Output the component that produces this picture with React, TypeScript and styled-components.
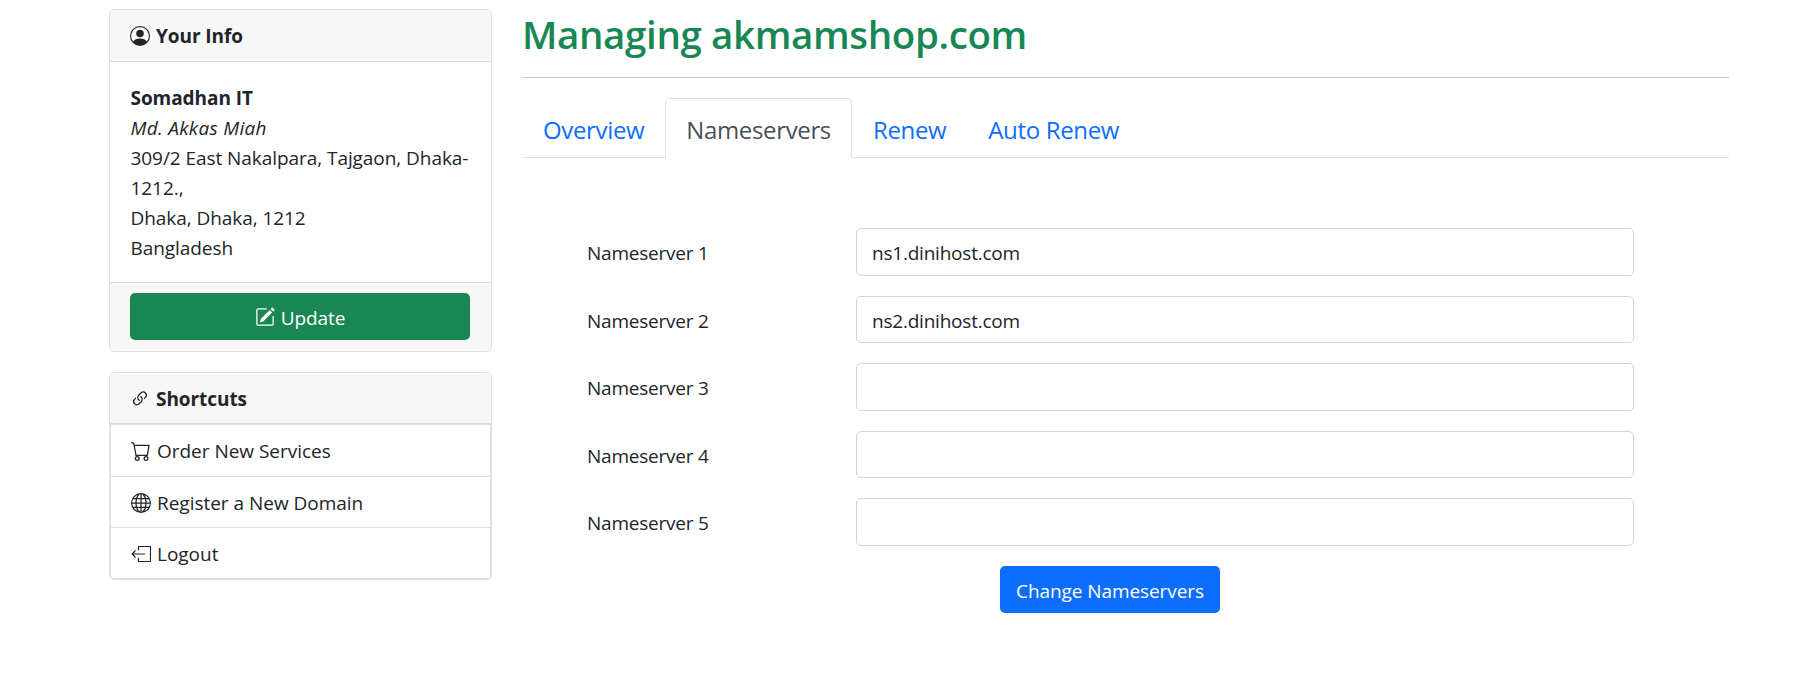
import React from 'react';
import styled, { createGlobalStyle } from 'styled-components';
import {
  BsPersonCircle,
  BsPencilSquare,
  BsLink45Deg,
  BsCart,
  BsGlobe,
} from 'react-icons/bs';

const GlobalStyle = createGlobalStyle`
  *, *::before, *::after { box-sizing: border-box; }
  body {
    margin: 0;
    background: #fff;
    color: #212529;
    font-family: 'Open Sans', 'Noto Sans', sans-serif;
    font-size: 19px;
    line-height: 30px;
    letter-spacing: -0.06px;
  }
`;

const Page = styled.div`
  display: flex;
  align-items: flex-start;
  gap: 29px;
  width: 1620px;
  margin-left: 109px;
  padding-top: 9px;
`;

const Sidebar = styled.aside`
  display: flex;
  flex-direction: column;
  gap: 20px;
  width: 383px;
  flex: none;
`;

const Card = styled.section`
  border: 1px solid #dfdfdf;
  border-radius: 5px;
  overflow: hidden;
`;

const CardHeader = styled.header<{ $height: number }>`
  display: flex;
  align-items: center;
  gap: 6px;
  height: ${(p) => p.$height}px;
  padding: 1px 20px 0;
  background: #f7f7f7;
  border-bottom: 1px solid #d8d8d8;
  font-weight: 700;
  svg { flex: none; }
`;

const CardBody = styled.div`
  height: 220px;
  padding: 21px 20px 19px 20.5px;
  em { letter-spacing: 0.3px; }
`;

const CardFooter = styled.footer`
  height: 69px;
  padding: 10px 21px 10px 20px;
  background: #f7f7f7;
  border-top: 1px solid #d8d8d8;
`;

const Button = styled.button<{ $color: string; $width: string }>`
  display: flex;
  align-items: center;
  justify-content: center;
  gap: 6px;
  width: ${(p) => p.$width};
  height: 47px;
  padding: 3px 0 0;
  border: 0;
  border-radius: 5px;
  background: ${(p) => p.$color};
  color: #fff;
  font: inherit;
  letter-spacing: -0.08px;
  white-space: nowrap;
  svg { margin-top: -3px; }
`;

const Shortcuts = styled.ul`
  margin: 0;
  padding: 0;
  list-style: none;
  border: 1px solid #dfdfdf;
`;

const Shortcut = styled.li`
  display: flex;
  align-items: center;
  gap: 6px;
  height: 51px;
  padding: 0 20px;
  letter-spacing: -0.02px;
  & + & {
    padding-top: 1px;
    border-top: 1px solid #dfdfdf;
  }
`;

const Main = styled.main`
  flex: 1;
  min-width: 0;
  padding-left: 1px;
`;

const Title = styled.h1`
  height: 69px;
  margin: 0;
  border-bottom: 1px solid #c8c9ca;
  color: #198754;
  font-size: 38.5px;
  font-weight: 600;
  line-height: 50px;
  letter-spacing: -0.38px;
`;

const Tabs = styled.nav`
  display: flex;
  height: 60px;
  margin-top: 20px;
  border-bottom: 1px solid #dee2e6;
`;

const Tab = styled.a<{ $active?: boolean }>`
  height: 60px;
  padding: 0 20px;
  border: 1px solid transparent;
  border-color: ${(p) => (p.$active ? '#dee2e6 #dee2e6 #fff' : 'transparent')};
  border-radius: 5px 5px 0 0;
  background: ${(p) => (p.$active ? '#fff' : 'transparent')};
  color: ${(p) => (p.$active ? '#495057' : '#0d6efd')};
  font-size: 24px;
  line-height: 62px;
  letter-spacing: -0.35px;
`;

const Form = styled.form`
  display: flex;
  flex-direction: column;
  gap: 20px;
  padding: 70px 95px 0 65px;
  letter-spacing: -0.22px;
`;

const Field = styled.label`
  display: grid;
  grid-template-columns: 269px 1fr;
  align-items: center;
`;

const FieldName = styled.span`
  padding-top: 3px;
`;

const Input = styled.input`
  height: 47.5px;
  padding: 3px 15px 0;
  border: 1px solid #ced4da;
  border-radius: 5px;
  background: #fff;
  color: #212529;
  font: inherit;
  letter-spacing: inherit;
  outline: 0;
`;

const Actions = styled.div`
  display: flex;
  padding-left: 413px;
`;

const tabs = ['Overview', 'Nameservers', 'Renew', 'Auto Renew'];
const nameservers = ['ns1.dinihost.com', 'ns2.dinihost.com', '', '', ''];

function LogoutIcon() {
  return (
    <svg width="20" height="20" viewBox="0 0 20 20" fill="none" stroke="currentColor" strokeWidth="1.2">
      <path d="M7.5 6.2V2.5h12v15h-12v-3.7" />
      <path d="M4.6 6.4 1.2 10l3.4 3.6M1.2 10H14" />
    </svg>
  );
}

export default function App() {
  return (
    <>
      <GlobalStyle />
      <Page>
        <Sidebar>
          <Card>
            <CardHeader $height={52}><BsPersonCircle size={20} />Your Info</CardHeader>
            <CardBody>
              <strong>Somadhan IT</strong><br />
              <em>Md. Akkas Miah</em><br />
              309/2 East Nakalpara, Tajgaon, Dhaka-<br />
              1212.,<br />
              Dhaka, Dhaka, 1212<br />
              Bangladesh
            </CardBody>
            <CardFooter>
              <Button $color="#198754" $width="100%"><BsPencilSquare size={20} />Update</Button>
            </CardFooter>
          </Card>
          <Card>
            <CardHeader $height={51}><BsLink45Deg size={20} />Shortcuts</CardHeader>
            <Shortcuts>
              <Shortcut><BsCart size={20} />Order New Services</Shortcut>
              <Shortcut><BsGlobe size={20} />Register a New Domain</Shortcut>
              <Shortcut><LogoutIcon />Logout</Shortcut>
            </Shortcuts>
          </Card>
        </Sidebar>
        <Main>
          <Title>Managing akmamshop.com</Title>
          <Tabs>
            {tabs.map((name) => (
              <Tab key={name} $active={name === 'Nameservers'}>{name}</Tab>
            ))}
          </Tabs>
          <Form>
            {nameservers.map((value, i) => (
              <Field key={i}>
                <FieldName>Nameserver {i + 1}</FieldName>
                <Input defaultValue={value} />
              </Field>
            ))}
            <Actions>
              <Button type="button" $color="#0d6efd" $width="220px">Change Nameservers</Button>
            </Actions>
          </Form>
        </Main>
      </Page>
    </>
  );
}
